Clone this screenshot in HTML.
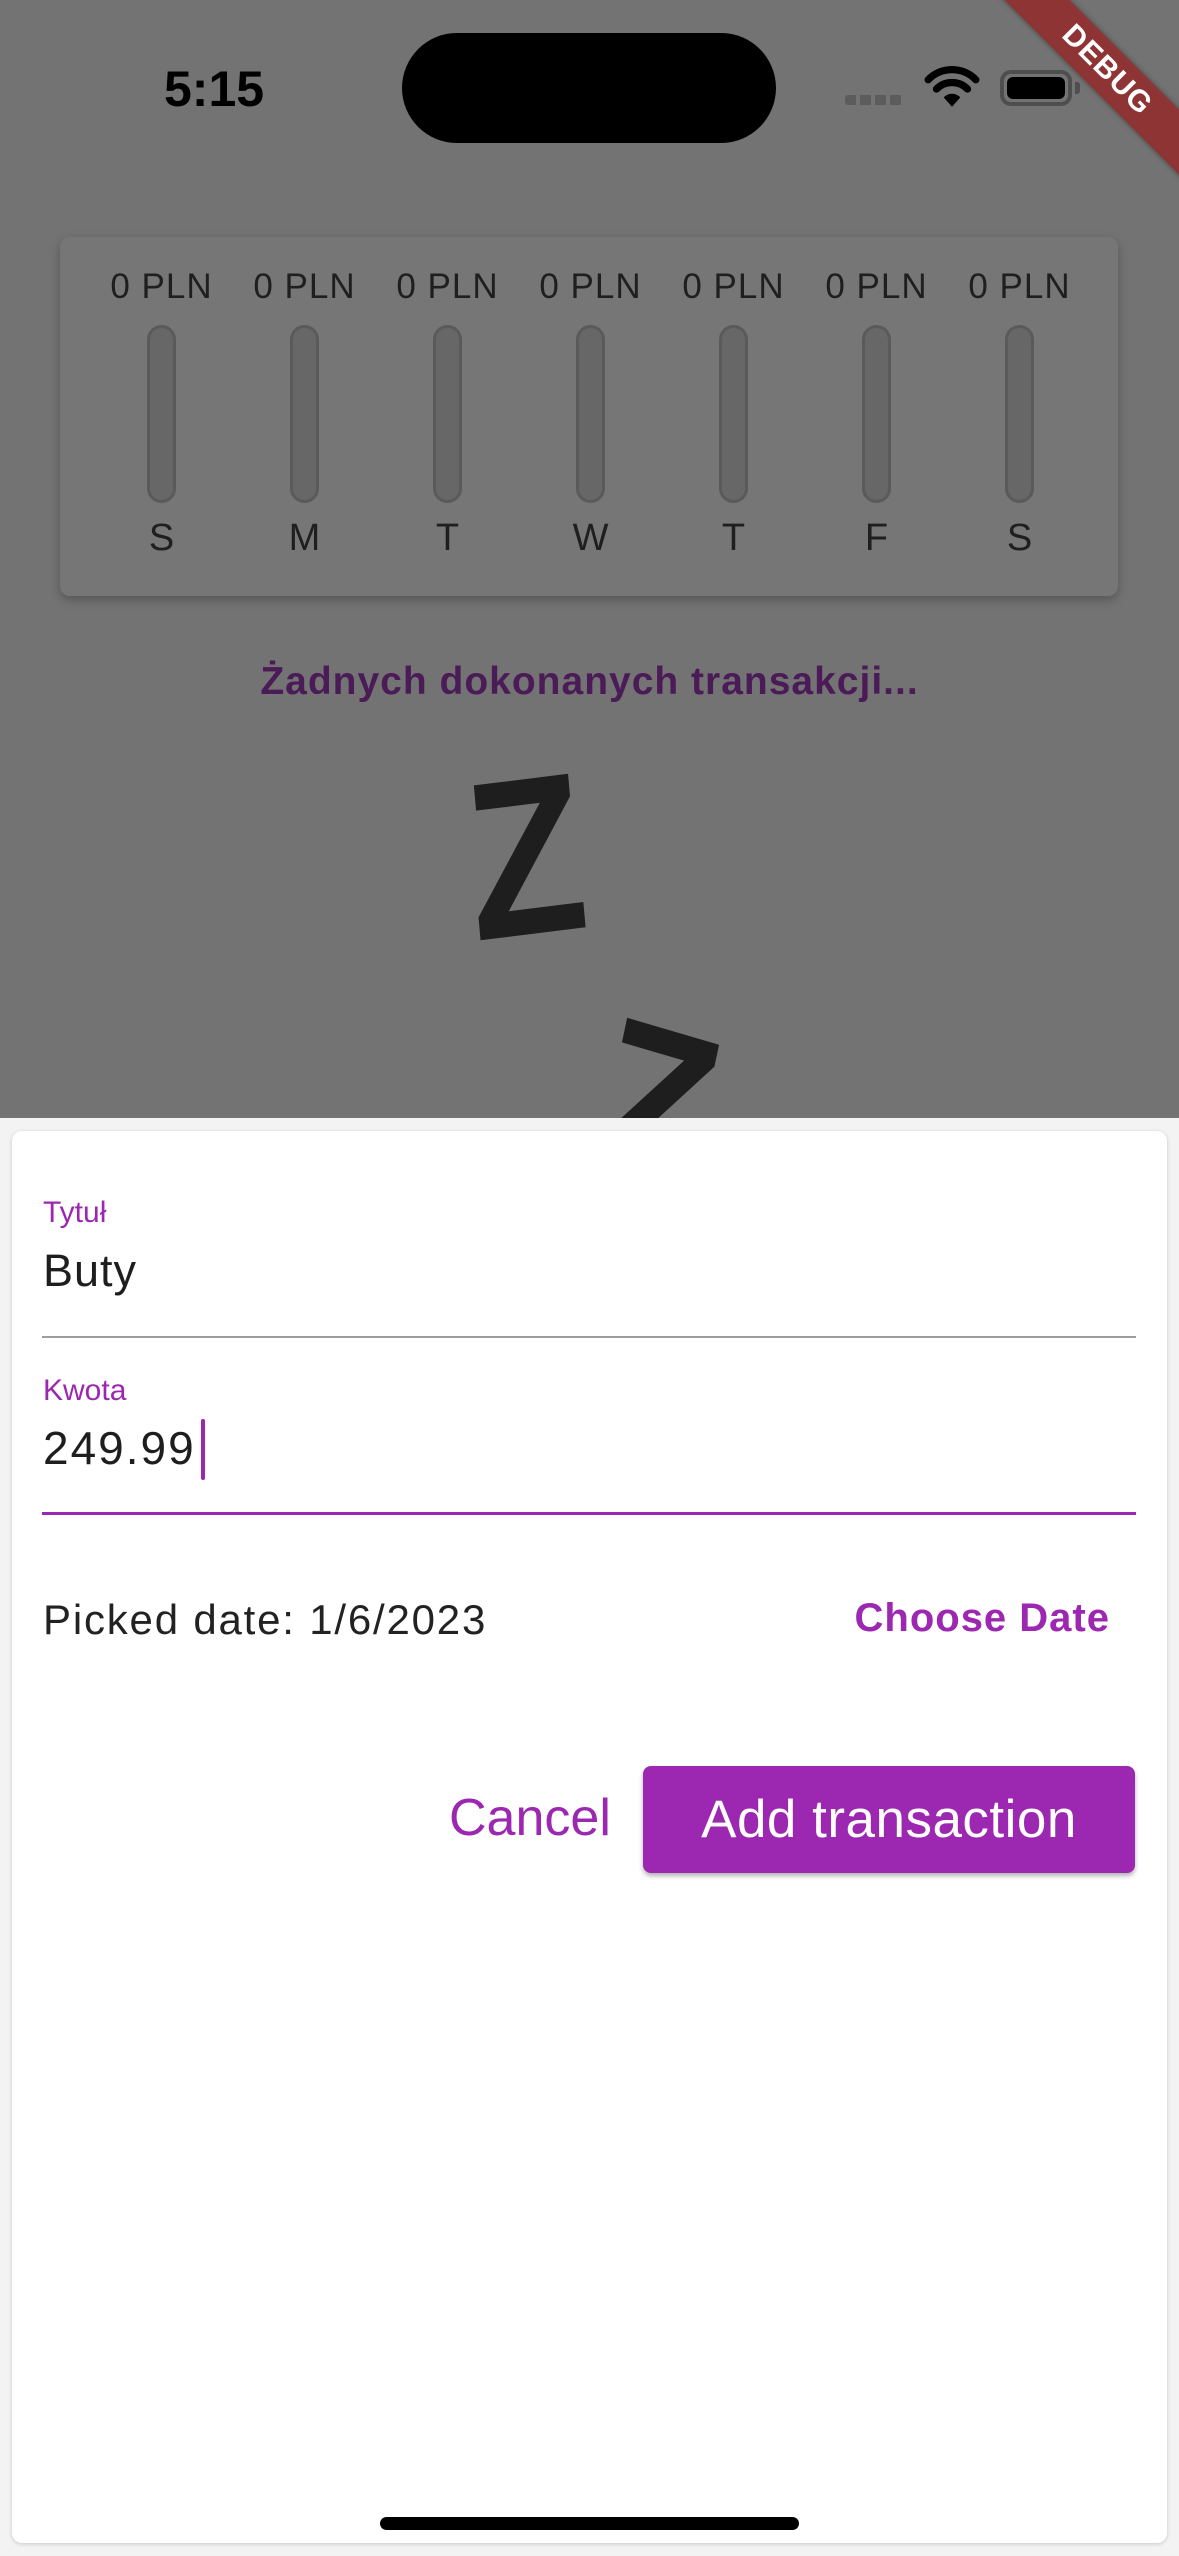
<!DOCTYPE html>
<html><head><meta charset="utf-8"><style>
*{margin:0;padding:0;box-sizing:border-box}
html,body{width:1179px;height:2556px;overflow:hidden;background:#f3f3f3;font-family:"Liberation Sans",sans-serif;position:relative}
.abs{position:absolute}
.top{left:0;top:0;width:1179px;height:1118px;background:#737373;overflow:hidden}
.card{left:60px;top:237px;width:1058px;height:359px;background:#767676;border-radius:10px;box-shadow:0 4px 10px rgba(0,0,0,0.25)}
.col{position:absolute;top:0;width:143px;text-align:center;color:#1f1f1f}
.pln{position:absolute;top:30px;width:100%;font-size:35px;letter-spacing:1px}
.bar{position:absolute;left:57px;top:88px;width:29px;height:178px;border:3px solid #5a5a5a;border-radius:15px;background:#676767}
.day{position:absolute;top:280px;width:100%;font-size:38px}
.sheet{left:12px;top:1131px;width:1155px;height:1412px;background:#fff;border-radius:10px;box-shadow:0 1px 4px rgba(0,0,0,0.18)}
.z{font-size:225px;font-weight:bold;color:#1e1e1e;line-height:1}
</style></head><body>
<div class="abs top">
  <div class="abs" style="left:164px;top:60px;font-size:50px;font-weight:bold;color:#000">5:15</div>
  <div class="abs" style="left:402px;top:33px;width:374px;height:110px;background:#000;border-radius:55px"></div>
  <div class="abs" style="left:845px;top:95px;width:57px;height:10px;background:repeating-linear-gradient(90deg,#5c5c5c 0 11px,transparent 11px 15px);border-radius:3px"></div>
  <svg class="abs" style="left:924px;top:66px" width="56" height="42" viewBox="0 0 54 40"><path d="M27 39 L19 30 A11 11 0 0 1 35 30 Z" fill="#000"/><path d="M12 22 A21 21 0 0 1 42 22" stroke="#000" stroke-width="7" fill="none" stroke-linecap="round"/><path d="M4 13 A32 32 0 0 1 50 13" stroke="#000" stroke-width="7" fill="none" stroke-linecap="round"/></svg>
  <div class="abs" style="left:1000px;top:70px;width:72px;height:36px;border:4px solid #4e4e4e;border-radius:11px;padding:3px"><div style="width:100%;height:100%;background:#000;border-radius:6px"></div></div>
  <div class="abs" style="left:1075px;top:82px;width:5px;height:12px;background:#4e4e4e;border-radius:0 3px 3px 0"></div>

  <div class="abs card">
    <div class="col" style="left:30px"><div class="pln">0 PLN</div><div class="bar"></div><div class="day">S</div></div>
    <div class="col" style="left:173px"><div class="pln">0 PLN</div><div class="bar"></div><div class="day">M</div></div>
    <div class="col" style="left:316px"><div class="pln">0 PLN</div><div class="bar"></div><div class="day">T</div></div>
    <div class="col" style="left:459px"><div class="pln">0 PLN</div><div class="bar"></div><div class="day">W</div></div>
    <div class="col" style="left:602px"><div class="pln">0 PLN</div><div class="bar"></div><div class="day">T</div></div>
    <div class="col" style="left:745px"><div class="pln">0 PLN</div><div class="bar"></div><div class="day">F</div></div>
    <div class="col" style="left:888px"><div class="pln">0 PLN</div><div class="bar"></div><div class="day">S</div></div>
  </div>
  <div class="abs" style="left:0;top:660px;width:1179px;text-align:center;font-size:39px;font-weight:bold;color:#4b1b57;letter-spacing:1px">Żadnych dokonanych transakcji...</div>
  <div class="abs z" style="left:458px;top:752px;transform:scaleX(0.85) rotate(-6deg);transform-origin:left top">Z</div>
  <div class="abs z" style="left:622px;top:980px;transform:scaleX(0.85) rotate(14deg);transform-origin:left top">Z</div>
  <div class="abs" style="left:957px;top:47px;width:300px;height:46px;background:#8e3434;transform:rotate(45deg);color:#fff;font-weight:bold;font-size:30px;text-align:center;line-height:46px;letter-spacing:1px;box-shadow:0 0 6px rgba(0,0,0,0.4)">DEBUG</div>
</div>

<div class="abs sheet"></div>
<div class="abs" style="left:43px;top:1196px;font-size:30px;color:#9c27b0">Tytuł</div>
<div class="abs" style="left:43px;top:1245px;font-size:45px;color:#1e1e1e;letter-spacing:1px">Buty</div>
<div class="abs" style="left:42px;top:1336px;width:1094px;height:2px;background:#9e9e9e"></div>
<div class="abs" style="left:43px;top:1374px;font-size:30px;color:#9c27b0">Kwota</div>
<div class="abs" style="left:43px;top:1421px;font-size:46px;color:#1e1e1e;letter-spacing:2px">249.99</div>
<div class="abs" style="left:201px;top:1419px;width:4px;height:61px;background:#9c27b0;border-radius:2px"></div>
<div class="abs" style="left:42px;top:1512px;width:1094px;height:3px;background:#9c27b0"></div>
<div class="abs" style="left:43px;top:1596px;font-size:42px;color:#222;letter-spacing:1.8px">Picked date: 1/6/2023</div>
<div class="abs" style="left:800px;width:310px;text-align:right;top:1596px;font-size:40px;font-weight:bold;color:#9c27b0;letter-spacing:1px">Choose Date</div>
<div class="abs" style="left:449px;top:1788px;font-size:52px;color:#9c27b0">Cancel</div>
<div class="abs" style="left:643px;top:1766px;width:492px;height:107px;background:#9c27b0;border-radius:8px;box-shadow:0 3px 5px rgba(0,0,0,0.3);color:#fff;font-size:53px;text-align:center;line-height:107px;letter-spacing:0.5px">Add transaction</div>
<div class="abs" style="left:380px;top:2517px;width:419px;height:13px;background:#000;border-radius:7px"></div>
</body></html>
